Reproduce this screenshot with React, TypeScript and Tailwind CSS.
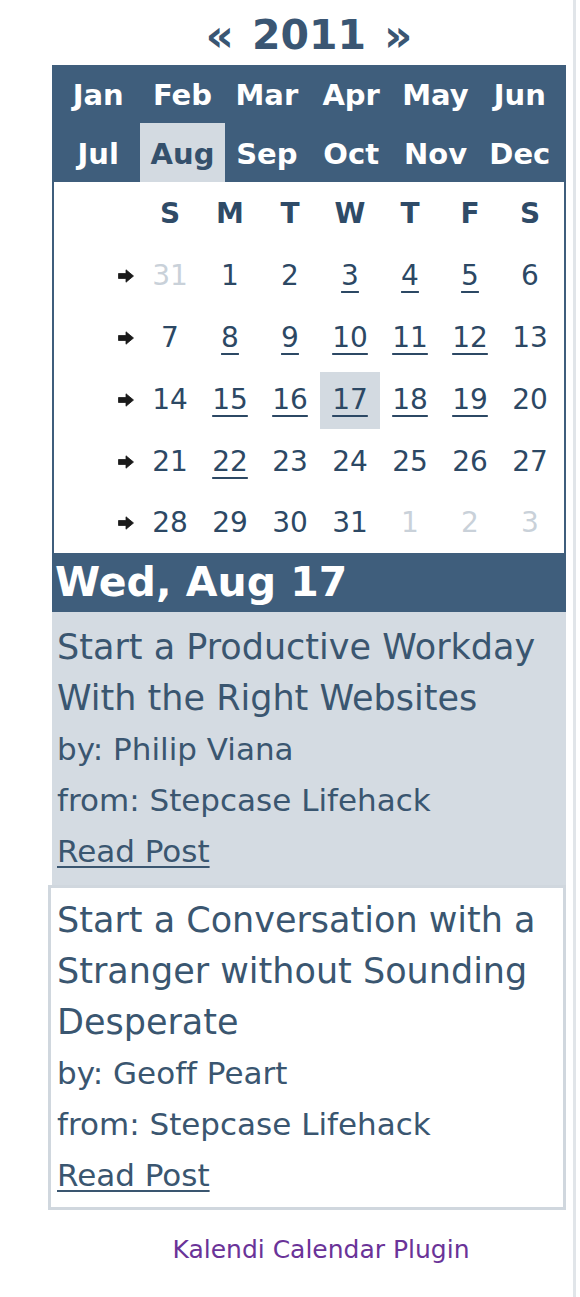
import React from "react";

const MONTHS = ["Jan", "Feb", "Mar", "Apr", "May", "Jun", "Jul", "Aug", "Sep", "Oct", "Nov", "Dec"];
const DOW = ["S", "M", "T", "W", "T", "F", "S"];

type Day = { n: number; muted?: boolean; link?: boolean; today?: boolean };

const WEEKS: Day[][] = [
  [{ n: 31, muted: true }, { n: 1 }, { n: 2 }, { n: 3, link: true }, { n: 4, link: true }, { n: 5, link: true }, { n: 6 }],
  [{ n: 7 }, { n: 8, link: true }, { n: 9, link: true }, { n: 10, link: true }, { n: 11, link: true }, { n: 12, link: true }, { n: 13 }],
  [{ n: 14 }, { n: 15, link: true }, { n: 16, link: true }, { n: 17, link: true, today: true }, { n: 18, link: true }, { n: 19, link: true }, { n: 20 }],
  [{ n: 21 }, { n: 22, link: true }, { n: 23 }, { n: 24 }, { n: 25 }, { n: 26 }, { n: 27 }],
  [{ n: 28 }, { n: 29 }, { n: 30 }, { n: 31 }, { n: 1, muted: true }, { n: 2, muted: true }, { n: 3, muted: true }],
];

const POSTS = [
  { title: "Start a Productive Workday With the Right Websites", by: "Philip Viana", from: "Stepcase Lifehack" },
  { title: "Start a Conversation with a Stranger without Sounding Desperate", by: "Geoff Peart", from: "Stepcase Lifehack" },
];

const font = "font-['Verdana','DejaVu_Sans',sans-serif] [font-variant-ligatures:none]";

function Arrow() {
  return (
    <svg width="16" height="14" viewBox="0 0 16 14" className="text-[#1a1a1a]">
      <path d="M0.5 4.5h7.5V0.8l7.5 6.2-7.5 6.2V9.5H0.5z" fill="currentColor" stroke="currentColor" strokeWidth="0.8" strokeLinejoin="round" />
    </svg>
  );
}

export default function App() {
  return (
    <div className={`w-[580px] min-h-[1297px] bg-white flex ${font}`}>
      <div className="w-[573px] pl-[48px] pr-[7px]">
        <div className="h-[65px] pt-[7px] flex items-center justify-center gap-[18px] pl-[4px] text-[41px] font-bold text-[#3a5673]">
          <span className="text-[44px]">«</span>
          <span>2011</span>
          <span className="text-[44px]">»</span>
        </div>

        <div className="ml-[4px] bg-[#3f5e7c]">
          <div className="grid grid-cols-6 px-[4px]">
            {MONTHS.map((m, i) => (
              <div
                key={m}
                className={[
                  "flex items-center justify-center pt-[4px] text-[29px] font-bold",
                  i < 6 ? "h-[58px]" : "h-[59px]",
                  m === "Aug" ? "bg-[#d3dae1] text-[#34506c]" : "text-white",
                ].join(" ")}
              >
                {m}
              </div>
            ))}
          </div>

          <div className="mx-[2px] bg-white">
            <div className="grid grid-cols-[86px_repeat(7,60px)] grid-rows-[63px_62px_62px_62px_62px_60px]">
              <div />
              {DOW.map((d, i) => (
                <div key={i} className="flex items-center justify-center text-[28px] font-bold text-[#2f4b67]">
                  {d}
                </div>
              ))}
              {WEEKS.map((w, wi) => (
                <React.Fragment key={wi}>
                  <div className="flex items-center justify-end pr-[6px]">
                    <Arrow />
                  </div>
                  {w.map((d, di) => (
                    <div key={di} className="flex items-center justify-center">
                      <span
                        className={[
                          "w-[60px] h-[57px] flex items-center justify-center text-[28px]",
                          d.muted ? "text-[#c9d1d9]" : "text-[#2c4864]",
                          d.link ? "underline decoration-2 underline-offset-[6px]" : "",
                          d.today ? "bg-[#d3dae1]" : "",
                        ].join(" ")}
                      >
                        {d.n}
                      </span>
                    </div>
                  ))}
                </React.Fragment>
              ))}
            </div>
          </div>

          <div className="h-[59px] flex items-center pl-[3px] text-[41px] font-bold text-white leading-none">
            Wed, Aug 17
          </div>
        </div>

        {POSTS.map((p, i) => (
          <div
            key={i}
            className={
              i === 0
                ? "ml-[4px] bg-[#d4dbe2] pl-[5px] pr-[4px] pt-[10px] pb-[8px] text-[#3a5670]"
                : "bg-white border-[3px] border-[#d0d7de] pl-[6px] pr-[4px] pt-[7px] pb-[6px] text-[#3a5670]"
            }
          >
            <div className="text-[35px] leading-[51px]">{p.title}</div>
            <div className="text-[31px] leading-[51px]">by: {p.by}</div>
            <div className="text-[31px] leading-[51px]">from: {p.from}</div>
            <div className="text-[31px] leading-[51px]">
              <a className="underline decoration-2 underline-offset-[4px] cursor-pointer">Read Post</a>
            </div>
          </div>
        ))}

        <div className="h-[80px] flex items-center justify-center pl-[28px] text-[25px] text-[#6a3398]">
          Kalendi Calendar Plugin
        </div>
      </div>
      <div className="w-[3px] bg-[#e1e5e9]" />
    </div>
  );
}
